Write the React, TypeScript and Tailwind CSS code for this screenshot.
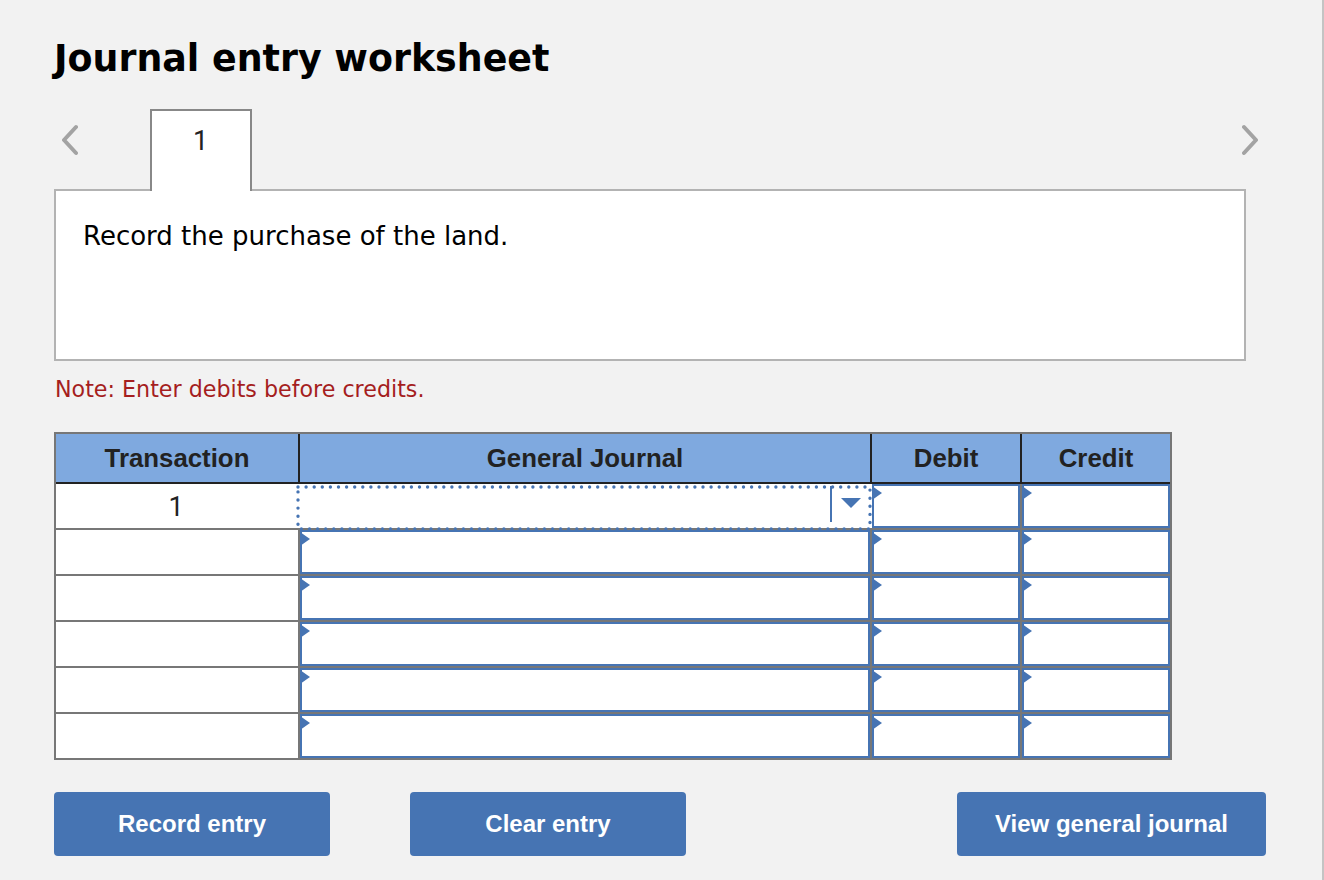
const BLUE = "#4674b3";

function Corner() {
  return (
    <svg className="absolute -left-[2px] top-0" width="10" height="15" viewBox="0 0 10 15">
      <path d="M0 0 L10 7 L0 14 Z" fill={BLUE} />
    </svg>
  );
}

function Entry({ className }: { className: string }) {
  return (
    <div className={`${className} relative border-2 border-[#4674b3] bg-white`}>
      <Corner />
    </div>
  );
}

function Chevron({ dir }: { dir: "left" | "right" }) {
  return (
    <svg width="16" height="32" viewBox="0 0 16 32" fill="none">
      <path
        d={dir === "left" ? "M14 3 L2 16 L14 29" : "M2 3 L14 16 L2 29"}
        stroke="#a3a3a3"
        strokeWidth="4"
        strokeLinecap="round"
        strokeLinejoin="round"
      />
    </svg>
  );
}

function Btn({ label, className }: { label: string; className: string }) {
  return (
    <button className={`${className} h-[64px] rounded-[4px] bg-[#4674b3] text-[24px] font-bold text-white [font-family:'Liberation_Sans',Arial,sans-serif]`}>
      {label}
    </button>
  );
}

function Row({ last }: { last?: boolean }) {
  return (
    <div className={`flex ${last ? "h-[44px]" : "h-[46px] border-b-2 border-[#777777]"}`}>
      <div className="w-[244px] border-r-2 border-[#777777] bg-white" />
      <Entry className="w-[570px]" />
      <div className="w-[2px] bg-[#777777]" />
      <Entry className="w-[148px]" />
      <div className="w-[2px] bg-[#777777]" />
      <Entry className="w-[148px]" />
    </div>
  );
}

export default function App() {
  return (
    <div className="h-[880px] w-full overflow-hidden border-r-2 border-[#c4c4c4] bg-[#f2f2f2] pl-[54px] pt-[33px] [font-family:'Liberation_Sans',Arial,sans-serif]">
      <h1 className="h-[52px] text-[36.4px] font-bold leading-[52px] text-black [font-family:'DejaVu_Sans',Verdana,sans-serif]">
        Journal entry worksheet
      </h1>

      <div className="relative z-10 mt-[24px] -mb-[2px] flex h-[82px] w-[1212px] items-start">
        <div className="ml-[8px] mt-[15px] w-[88px]">
          <Chevron dir="left" />
        </div>
        <div className="flex h-[82px] w-[102px] justify-center border-2 border-b-0 border-[#888888] bg-white pt-[12px] pr-[1px] text-[27px] leading-[36px] text-[#222222] [font-family:Roboto,Arial,sans-serif]">
          1
        </div>
        <div className="mr-[8px] ml-auto mt-[15px]">
          <Chevron dir="right" />
        </div>
      </div>

      <div className="h-[172px] w-[1192px] border-2 border-[#b3b3b3] bg-white pl-[27px] pt-[27px] text-[26px] leading-[36px] text-black [font-family:'DejaVu_Sans',Verdana,sans-serif]">
        Record the purchase of the land.
      </div>

      <p className="mt-[14px] pl-[1px] text-[22.2px] leading-[28px] text-[#a51e1e] [font-family:'DejaVu_Sans',Verdana,sans-serif]">
        Note: Enter debits before credits.
      </p>

      <div className="relative mt-[29px] w-[1118px] border-2 border-[#777777]">
        <div className="flex h-[50px] border-b-2 border-[#222222] bg-[#7fa9df] text-center text-[25.8px] font-bold leading-[48px] text-[#222222]">
          <div className="w-[244px] border-r-2 border-[#222222]">Transaction</div>
          <div className="w-[572px] border-r-2 border-[#222222]">General Journal</div>
          <div className="w-[150px] border-r-2 border-[#222222]">Debit</div>
          <div className="w-[148px]">Credit</div>
        </div>

        <div className="flex h-[46px] border-b-2 border-[#777777]">
          <div className="w-[242px] bg-white pt-[1px] pr-[2px] text-center text-[27px] leading-[44px] text-[#222222] [font-family:Roboto,Arial,sans-serif]">1</div>
          <div className="relative w-[574px] bg-white">
            <div className="absolute right-[40px] top-[2px] h-[36px] w-[2px] bg-[#4674b3]" />
            <svg className="absolute left-[543px] top-[14px]" width="20" height="10" viewBox="0 0 20 10">
              <path d="M0 0 H20 L10 10 Z" fill={BLUE} />
            </svg>
            <svg className="absolute -left-[4px] top-0 overflow-visible" width="580" height="46" viewBox="0 0 580 46" fill="none">
              <rect x="4" y="3" width="572" height="42" stroke={BLUE} strokeWidth="3.4" strokeLinecap="round" strokeDasharray="0 8.1" />
            </svg>
          </div>
          <Entry className="w-[148px]" />
          <div className="w-[2px] bg-[#777777]" />
          <Entry className="w-[148px]" />
        </div>

        <Row />
        <Row />
        <Row />
        <Row />
        <Row last />
      </div>

      <div className="mt-[32px] flex w-[1212px]">
        <Btn label="Record entry" className="w-[276px]" />
        <Btn label="Clear entry" className="ml-[80px] w-[276px]" />
        <Btn label="View general journal" className="ml-auto w-[309px]" />
      </div>
    </div>
  );
}
